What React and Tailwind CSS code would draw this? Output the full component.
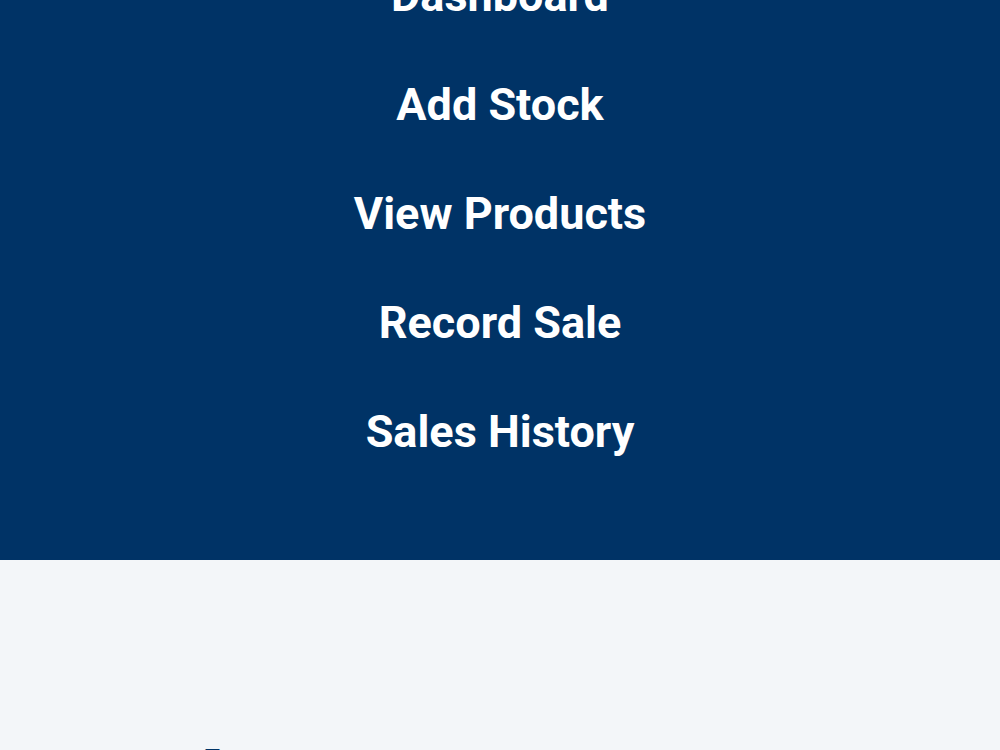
export default function App() {
  const items = ["Dashboard", "Add Stock", "View Products", "Record Sale", "Sales History"];
  return (
    <div className="min-h-[750px] bg-[#f3f6f9] overflow-hidden" style={{ fontFamily: "Roboto, 'Liberation Sans', sans-serif" }}>
      <nav className="bg-[#003366] -mt-[59px] pb-[74px]">
        <ul className="flex flex-col">
          {items.map((t) => (
            <li key={t} className="h-[109px] flex items-center justify-center">
              <a className="text-white font-bold text-[45px] leading-none">{t}</a>
            </li>
          ))}
        </ul>
      </nav>
      <main className="pt-[186px] px-[205px]">
        <h2 className="text-[#003366] font-bold text-[24px] leading-none">Top movers</h2>
      </main>
    </div>
  );
}
